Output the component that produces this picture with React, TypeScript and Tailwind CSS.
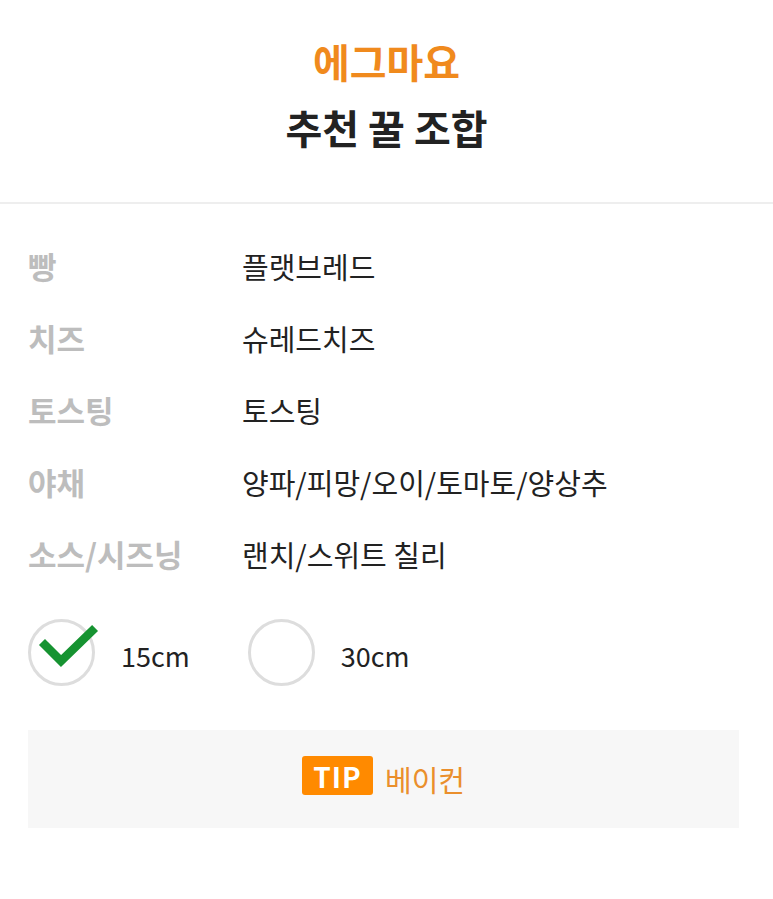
import React from "react";

const rows = [
  { label: "빵", value: "플랫브레드" },
  { label: "치즈", value: "슈레드치즈" },
  { label: "토스팅", value: "토스팅" },
  { label: "야채", value: "양파/피망/오이/토마토/양상추" },
  { label: "소스/시즈닝", value: "랜치/스위트 칠리" },
];

function SizeOption({ label, checked }: { label: string; checked?: boolean }) {
  return (
    <div className="flex items-center">
      <div className="relative w-[67px] h-[67px] rounded-full border-[3px] border-[#dddddd] shrink-0">
        {checked && (
          <svg
            className="absolute left-[-3px] top-[-3px] overflow-visible"
            width="67"
            height="67"
            viewBox="0 0 67 67"
          >
            <path
              d="M17 26 L33 42 L64 12"
              fill="none"
              stroke="#169331"
              strokeWidth="8.5"
              strokeLinecap="square"
            />
          </svg>
        )}
      </div>
      <span className="ml-[26px] mt-[8px] text-[27px] text-[#222]">{label}</span>
    </div>
  );
}

export default function App() {
  return (
    <div
      className="w-[773px] h-[899px] bg-white"
      style={{ fontFamily: '"Noto Sans CJK KR", "Noto Sans", sans-serif' }}
    >
      <header className="flex flex-col items-center pt-[34px] pb-[48px]">
        <h1 className="text-[40px] leading-[54px] font-bold text-[#f08a1d]">에그마요</h1>
        <h2 className="mt-[12px] text-[40px] leading-[54px] font-bold text-[#222]">추천 꿀 조합</h2>
      </header>
      <div className="h-[2px] bg-[#eeeeee]" />

      <div className="px-[28px] pt-[26px]">
        {rows.map((r) => (
          <div key={r.label} className="flex items-center h-[72px]">
            <div className="w-[214px] text-[31px] leading-[40px] font-bold text-[#bdbdbd]">{r.label}</div>
            <div className="text-[29px] leading-[40px] text-[#222]">{r.value}</div>
          </div>
        ))}

        <div className="flex items-center gap-[58px] mt-[29px]">
          <SizeOption label="15cm" checked />
          <SizeOption label="30cm" />
        </div>

        <div className="mt-[44px] h-[98px] w-[711px] bg-[#f7f7f7] flex items-center justify-center gap-[12px]">
          <span className="h-[39px] w-[71px] mb-[7px] flex items-center justify-center rounded-[3px] bg-[#ff8a00] text-white text-[28px] tracking-[1px] font-bold leading-none">
            TIP
          </span>
          <span className="text-[29px] leading-[40px] text-[#ea8f2c]">베이컨</span>
        </div>
      </div>
    </div>
  );
}
